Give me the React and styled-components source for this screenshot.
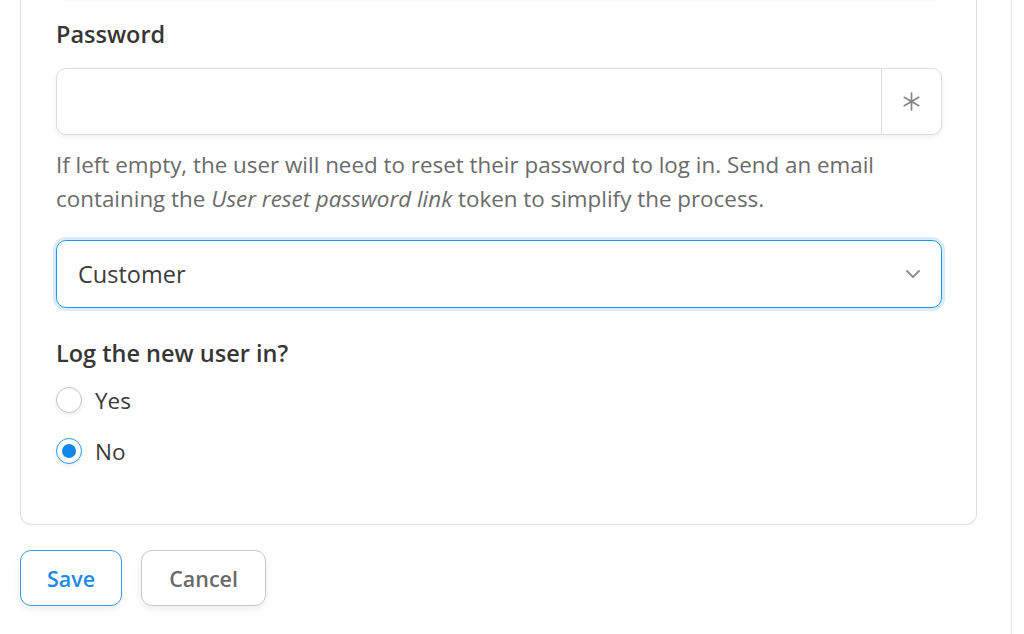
import styled, { createGlobalStyle } from "styled-components";

const GlobalStyle = createGlobalStyle`
  html, body {
    margin: 0;
    background: #ffffff;
    overflow: hidden;
  }
  body {
    font-family: "Open Sans", "Noto Sans", sans-serif;
    color: #3b3b3b;
  }
`;

const Page = styled.div`
  width: 1028px;
  height: 716px;
  margin: -70px 0 0 -16px;
  border: 1px solid #e4e4e4;
  border-top: none;
  border-radius: 0 0 10px 10px;
  padding: 0 34px 0 35px;
  box-sizing: border-box;
`;

const Card = styled.div`
  border: 1px solid #dedede;
  border-top: none;
  border-radius: 0 0 11px 11px;
  padding: 0 34px 56px 35px;
`;

const Field = styled.div`
  margin-bottom: ${(p) => p.gap ?? 24}px;
`;

const Label = styled.div`
  font-size: 23.5px;
  font-weight: 600;
  line-height: 33px;
  color: #363636;
  margin-bottom: ${(p) => p.gap ?? 17}px;
`;

const InputGroup = styled.div`
  display: flex;
  height: 67px;
  border: 1px solid #dcdcdc;
  border-radius: 10px;
  box-shadow: 0 2px 5px rgba(0, 0, 0, 0.07);
  box-sizing: border-box;
  background: #fff;
  overflow: hidden;
`;

const TextInput = styled.input`
  flex: 1;
  border: none;
  outline: none;
  padding: 0 21px;
  font: inherit;
  font-size: 22px;
  background: transparent;
`;

const Addon = styled.div`
  width: 59px;
  border-left: 1px solid #dcdcdc;
  display: flex;
  align-items: center;
  justify-content: center;
  color: #858585;
`;

const Help = styled.p`
  margin: 13px 0 0;
  font-size: 22.4px;
  line-height: 34px;
  color: #6b6b6b;

  em {
    font-style: italic;
  }
`;

const Select = styled.div`
  height: 68px;
  box-sizing: border-box;
  border: 1px solid #1f95ec;
  border-radius: 10px;
  box-shadow: 0 0 0 3px #d9ecfc;
  display: flex;
  align-items: center;
  justify-content: space-between;
  padding: 0 20px 0 21px;
  font-size: 23.5px;
  color: #3b3b3b;
`;

const RadioList = styled.div`
  display: flex;
  flex-direction: column;
  gap: 17px;
`;

const RadioRow = styled.label`
  display: flex;
  align-items: center;
  gap: 13px;
  height: 34px;
  font-size: 22.5px;
  color: #3b3b3b;
`;

const RadioDot = styled.span`
  width: 26px;
  height: 26px;
  border-radius: 50%;
  box-sizing: border-box;
  border: 1px solid ${(p) => (p.checked ? "#2a98ec" : "#c4c4c4")};
  box-shadow: 0 2px 4px rgba(0, 0, 0, 0.08);
  background: #fff;
  display: flex;
  align-items: center;
  justify-content: center;

  &::after {
    content: "";
    width: 14px;
    height: 14px;
    border-radius: 50%;
    background: ${(p) => (p.checked ? "#1187e8" : "transparent")};
  }
`;

const Actions = styled.div`
  display: flex;
  gap: 19px;
  margin-top: 25px;
`;

const Button = styled.button`
  height: 56px;
  padding: 0 ${(p) => (p.primary ? 26 : 27)}px;
  font-family: inherit;
  font-size: 21.5px;
  font-weight: 600;
  border-radius: 11px;
  background: #fff;
  border: 1px solid ${(p) => (p.primary ? "#3a9bec" : "#c9c9c9")};
  color: ${(p) => (p.primary ? "#1c8be6" : "#6a6a6a")};
  box-shadow: 0 3px 8px rgba(0, 0, 0, 0.08);
`;

export default function App() {
  return (
    <>
      <GlobalStyle />
      <Page>
        <Card>
          <Field gap={21}>
            <InputGroup>
              <TextInput />
            </InputGroup>
          </Field>

          <Field>
            <Label>Password</Label>
            <InputGroup>
              <TextInput type="password" />
              <Addon>
                <svg width="21" height="21" viewBox="0 0 20 20" fill="none" stroke="currentColor" strokeWidth="1.6" strokeLinecap="round">
                  <path d="M10 2v16M3.1 6l13.8 8M3.1 14l13.8-8" />
                </svg>
              </Addon>
            </InputGroup>
            <Help>
              If left empty, the user will need to reset their password to log in. Send an email
              containing the <em>User reset password link</em> token to simplify the process.
            </Help>
          </Field>

          <Field gap={29}>
            <Select>
              <span>Customer</span>
              <svg width="16" height="10" viewBox="0 0 16 10" fill="none" stroke="#8f8f8f" strokeWidth="2" strokeLinecap="round" strokeLinejoin="round">
                <path d="M2 2l6 6 6-6" />
              </svg>
            </Select>
          </Field>

          <Field gap={0}>
            <Label gap={13}>Log the new user in?</Label>
            <RadioList>
              <RadioRow>
                <RadioDot />
                Yes
              </RadioRow>
              <RadioRow>
                <RadioDot checked />
                No
              </RadioRow>
            </RadioList>
          </Field>
        </Card>

        <Actions>
          <Button primary>Save</Button>
          <Button>Cancel</Button>
        </Actions>
      </Page>
    </>
  );
}
